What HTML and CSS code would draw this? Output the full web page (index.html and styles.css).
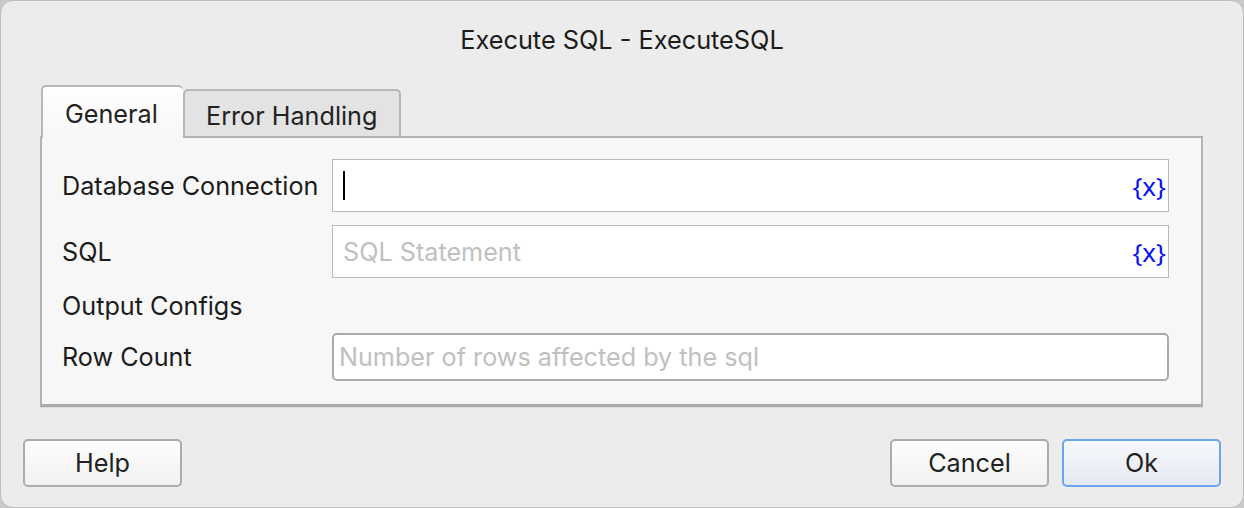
FILE: index.html
```html
<!DOCTYPE html>
<html>
<head>
<meta charset="utf-8">
<link rel="stylesheet" href="styles.css">
</head>
<body>
<div class="window">
  <div class="title">Execute SQL - ExecuteSQL</div>
  <div class="tabs">
    <div class="tab active">General</div>
    <div class="tab">Error Handling</div>
  </div>
  <div class="panel">
    <div class="row">
      <div class="label">Database Connection</div>
      <div class="field"><span class="caret"></span><span class="var">{x}</span></div>
    </div>
    <div class="row">
      <div class="label">SQL</div>
      <div class="field"><span class="ph">SQL Statement</span><span class="var">{x}</span></div>
    </div>
    <div class="row section">
      <div class="label">Output Configs</div>
    </div>
    <div class="row">
      <div class="label">Row Count</div>
      <div class="field round"><span class="ph">Number of rows affected by the sql</span></div>
    </div>
  </div>
  <div class="buttons">
    <div class="btn">Help</div>
    <div class="spacer"></div>
    <div class="btn">Cancel</div>
    <div class="btn primary">Ok</div>
  </div>
</div>
</body>
</html>
```

FILE: styles.css
```css
html, body {
  margin: 0;
  padding: 0;
  background: #c9c9c9;
}
body {
  width: 1244px;
  height: 508px;
  overflow: hidden;
  font-family: Inter, "Noto Sans", "Liberation Sans", sans-serif;
  color: #222;
}
.window {
  box-sizing: border-box;
  width: 1244px;
  height: 508px;
  background: #ececec;
  border-radius: 13px;
  border: 1px solid #bdbdbd;
  padding: 0 22px 0 22px;
  display: flex;
  flex-direction: column;
}
.title {
  text-align: center;
  font-size: 25.3px;
  height: 30px;
  line-height: 30px;
  margin-top: 24px;
  color: #1c1c1c;
}
.tabs {
  display: flex;
  align-items: flex-end;
  margin-top: 30px;
  margin-left: 18px;
  height: 51px;
}
.tab {
  box-sizing: border-box;
  height: 47px;
  padding: 0 0 0 21px;
  width: 218px;
  font-size: 25.2px;
  line-height: 50px;
  background: #e3e3e3;
  border: 2px solid #b8b8b8;
  border-bottom: none;
  border-radius: 5px 5px 0 0;
  color: #222;
}
.tab.active {
  line-height: 54px;
  background: linear-gradient(#ffffff, #f7f7f7);
  border-right: none;
  padding: 0 0 0 22px;
  width: 142px;
  position: relative;
  z-index: 1;
  margin-bottom: -2px;
  height: 53px;
}
.panel {
  box-sizing: border-box;
  width: 1163px;
  margin-left: 17px;
  height: 271px;
  background: #f7f7f7;
  border: 2px solid #b3b3b3;
  border-bottom: 3px solid #aaaaaa;
  box-shadow: 0 1px 0 #dcdcdc;
  padding: 21px 32px 0 20px;
  display: flex;
  flex-direction: column;
}
.row {
  display: flex;
  align-items: center;
  height: 53px;
  margin-bottom: 13px;
}
.row.section {
  height: 34px;
  margin-bottom: 7px;
  margin-top: -2px;
}
.label {
  width: 270px;
  font-size: 25.2px;
  color: #1c1c1c;
}
.field {
  box-sizing: border-box;
  flex: 1;
  height: 53px;
  background: #fff;
  border: 1px solid #b9b9b9;
  display: flex;
  align-items: center;
  padding: 0 2px 0 10px;
  font-size: 25.2px;
}
.field.round {
  height: 48px;
  border: 2px solid #ababab;
  border-radius: 5px;
  padding-left: 5px;
}
.caret {
  width: 2px;
  height: 29px;
  background: #000;
}
.ph {
  color: #c0c0c0;
  flex: 1;
}
.var {
  margin-left: auto;
  color: #0a14f0;
  font-family: "Noto Sans", Inter, sans-serif;
  font-size: 26px;
  letter-spacing: 0;
}
.buttons {
  display: flex;
  margin-top: 32px;
  align-items: center;
}
.spacer { flex: 1; }
.btn {
  box-sizing: border-box;
  width: 159px;
  height: 48px;
  border: 2px solid #acacac;
  border-radius: 5px;
  background: linear-gradient(#fdfdfd, #f1f1f1);
  font-size: 25.2px;
  line-height: 44px;
  text-align: center;
  color: #222;
}
.btn + .btn { margin-left: 13px; }
.btn.primary {
  border-color: #6aa5f0;
  background: linear-gradient(#f6f8fb, #e4e9f1);
}
```
